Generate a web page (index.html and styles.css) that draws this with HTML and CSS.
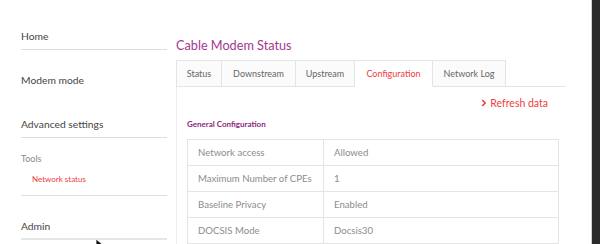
FILE: index.html
```html
<!DOCTYPE html>
<html lang="en">
<head>
    <meta charset="UTF-8">
    <title>Cable Modem Status</title>
    <link rel="stylesheet" href="styles.css">
</head>
<body>
    <div class="window">
        <div class="page">
            <!-- Side navigation -->
            <nav class="sidebar">
                <a class="nav-item">Home</a>
                <a class="nav-item no-line">Modem mode</a>
                <a class="nav-item">Advanced settings</a>
                <div class="nav-group">
                    <div class="group-title">Tools</div>
                    <a class="sub-item active">Network status</a>
                </div>
                <a class="nav-item admin">Admin</a>
            </nav>

            <!-- Main content -->
            <main class="content">
                <h1 class="page-title">Cable Modem Status</h1>

                <div class="tabs">
                    <div class="tab tab-status">Status</div>
                    <div class="tab tab-down">Downstream</div>
                    <div class="tab tab-up">Upstream</div>
                    <div class="tab tab-config active">Configuration</div>
                    <div class="tab tab-log">Network Log</div>
                    <div class="tab-fill"></div>
                </div>

                <div class="panel">
                    <div class="panel-actions">
                        <a class="refresh">
                            <svg class="chevron" width="6" height="8" viewBox="0 0 6 8">
                                <path d="M1.2 1 L4.2 4 L1.2 7" fill="none" stroke="currentColor" stroke-width="1.6"/>
                            </svg>
                            Refresh data
                        </a>
                    </div>

                    <h3 class="section-title">General Configuration</h3>

                    <table class="info-table">
                        <tr><td>Network access</td><td>Allowed</td></tr>
                        <tr><td>Maximum Number of CPEs</td><td>1</td></tr>
                        <tr><td>Baseline Privacy</td><td>Enabled</td></tr>
                        <tr><td>DOCSIS Mode</td><td>Docsis30</td></tr>
                    </table>
                </div>
            </main>
        </div>
        <div class="edge"></div>
    </div>

    <svg class="cursor" width="10" height="12" viewBox="0 0 10 12">
        <path d="M1 1 L1 10 L3.5 7.8 L5.5 11.5 L7 10.8 L5.2 7.2 L8.5 7.2 Z" fill="#111" stroke="#fff" stroke-width="0.8"/>
    </svg>
</body>
</html>
```

FILE: styles.css
```css
:root {
    --purple: #a3378f;
    --purple-dark: #8e1f7f;
    --red: #ee3d3d;
    --text: #454545;
    --text-light: #8c8c8c;
    --line: #e4e4e4;
}

* {
    margin: 0;
    padding: 0;
    box-sizing: border-box;
}

body {
    font-family: "Lato", "Liberation Sans", sans-serif;
    background: #ffffff;
    color: var(--text);
    width: 600px;
    height: 244px;
    overflow: hidden;
    position: relative;
}

a {
    text-decoration: none;
    color: inherit;
}

.window {
    display: flex;
    height: 244px;
}

.page {
    flex: 1;
    display: flex;
    border-right: 1px solid #cfcfcf;
}

.edge {
    width: 8px;
    background: #2b2b2b;
}

/* Sidebar */
.sidebar {
    width: 146px;
    margin-left: 21px;
    padding-top: 6px;
    display: flex;
    flex-direction: column;
}

.nav-item {
    display: block;
    font-size: 10.3px;
    line-height: 14px;
    padding: 23px 0 6px;
    border-bottom: 1px solid #dedede;
    color: var(--text);
}

.nav-item.no-line {
    border-bottom-color: transparent;
}

.nav-item.admin {
    padding: 23px 0 5px;
    border-bottom: 2px solid #e6e6e6;
}

.nav-group {
    padding: 15px 0 10px;
    border-bottom: 1px solid #dedede;
}

.group-title {
    font-size: 9px;
    line-height: 12px;
    color: #8a8a8a;
}

.sub-item {
    display: block;
    margin-top: 8px;
    padding-left: 11px;
    font-size: 8px;
    line-height: 12px;
    color: var(--red);
}

/* Main */
.content {
    margin-left: 9px;
    width: 390px;
}

.page-title {
    font-size: 12.7px;
    font-weight: 400;
    line-height: 16px;
    color: var(--purple);
    margin-top: 37px;
    margin-bottom: 7px;
}

.tabs {
    display: flex;
    height: 27px;
}

.tab {
    font-size: 9px;
    line-height: 26px;
    text-align: center;
    color: #666;
    border: 1px solid var(--line);
    border-left: none;
    background: #fbfbfb;
}

.tab-status {
    width: 46px;
    border-left: 1px solid var(--line);
}

.tab-down { width: 74px; }
.tab-up { width: 59px; }
.tab-config { width: 78px; }
.tab-log { width: 73px; }

.tab.active {
    color: var(--red);
    background: #ffffff;
    border-bottom-color: transparent;
}

.tab-fill {
    flex: 1;
    border-bottom: 1px solid var(--line);
}

.panel {
    border-left: 1px solid #ececec;
    height: 160px;
    padding: 10px 7px 0 10px;
}

.panel-actions {
    display: flex;
    justify-content: flex-end;
    padding-right: 11px;
}

.refresh {
    display: flex;
    align-items: center;
    gap: 3px;
    font-size: 10.5px;
    line-height: 12px;
    color: var(--red);
}

.chevron {
    display: block;
}

.section-title {
    font-size: 8px;
    font-weight: 700;
    line-height: 12px;
    color: var(--purple-dark);
    margin-top: 9px;
    margin-bottom: 9px;
}

.info-table {
    width: 372px;
    border-collapse: collapse;
    font-size: 9.6px;
    color: var(--text-light);
}

.info-table td {
    border: 1px solid var(--line);
    height: 26px;
    padding: 0 10px;
}

.info-table td:first-child {
    width: 136px;
}

.cursor {
    position: absolute;
    left: 95px;
    top: 238px;
}
```
